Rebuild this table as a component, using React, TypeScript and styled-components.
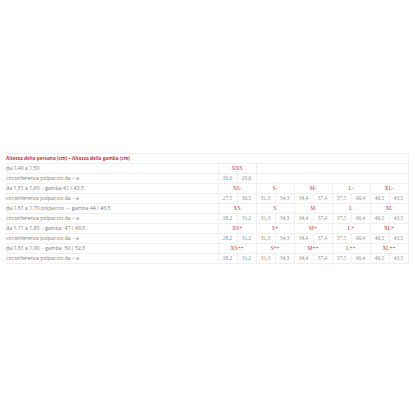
import React from 'react'
import styled, { createGlobalStyle } from 'styled-components'

const Global = createGlobalStyle`
  html, body {
    margin: 0;
    padding: 0;
    background: #fff;
  }
`

const Page = styled.div`
  width: 416px;
  height: 416px;
  padding: 153px 0 0 6px;
  box-sizing: border-box;
`

const Table = styled.table`
  width: 402px;
  table-layout: fixed;
  border-collapse: collapse;
  font-family: 'Open Sans', 'Liberation Sans', sans-serif;
  font-size: 5.2px;
  line-height: 9px;
  color: #7a7a7a;
`

const LabelCell = styled.td<{ $head?: boolean }>`
  width: 212px;
  height: 9px;
  padding: 0;
  border-top: 1px solid #efefef;
  border-bottom: 1px solid #efefef;
  border-right: 1px solid #efefef;
  color: ${(p) => (p.$head ? '#c8343a' : '#7a7a7a')};
  font-size: ${(p) => (p.$head ? '4.7px' : '5.2px')};
  font-weight: ${(p) => (p.$head ? 700 : 400)};
  white-space: pre;
  overflow: hidden;
`

const Cell = styled.td<{ $size?: boolean }>`
  height: 9px;
  padding: 0;
  border: 1px solid #efefef;
  text-align: center;
  font-family: 'Liberation Serif', serif;
  font-size: 5.4px;
  color: ${(p) => (p.$size ? '#c8343a' : '#8f8f8f')};
  white-space: nowrap;
`

const ColLabel = styled.col`
  width: 212px;
`
const ColVal = styled.col`
  width: 19px;
`

type Group = {
  label: string
  sizes: string[]
  values: string[]
}

const groups: Group[] = [
  { label: 'da 1,51 a 1,60  - gamba 41 / 43,5', sizes: ['XS-', 'S-', 'M-', 'L-', 'XL-'], values: ['27,5', '30,5', '31,3', '34,3', '34,4', '37,4', '37,5', '40,4', '40,5', '43,5'] },
  { label: 'da 1,61 a 1,70 polpaccio  –  gamba 44 / 46,5', sizes: ['XS', 'S', 'M', 'L', 'XL'], values: ['28,2', '31,2', '31,3', '34,3', '34,4', '37,4', '37,5', '40,4', '40,5', '43,5'] },
  { label: 'da 1,71 a 1,80  - gamba  47 / 49,5', sizes: ['XS+', 'S+', 'M+', 'L+', 'XL+'], values: ['28,2', '31,2', '31,3', '34,3', '34,4', '37,4', '37,5', '40,4', '40,5', '43,5'] },
  { label: 'da 1,81 a 1,90  - gamba  50 / 52,5', sizes: ['XS++', 'S++', 'M++', 'L++', 'XL++'], values: ['28,2', '31,2', '31,3', '34,3', '34,4', '37,4', '37,5', '40,4', '40,5', '43,5'] },
]

const circ = 'circonferenza polpaccio da – a'

export default function App() {
  return (
    <Page>
      <Global />
      <Table>
        <colgroup>
          <ColLabel />
          {Array.from({ length: 10 }).map((_, i) => (
            <ColVal key={i} />
          ))}
        </colgroup>
        <tbody>
          <tr>
            <LabelCell $head colSpan={11}>
              Altezza della persona (cm) – Altezza della gamba (cm)
            </LabelCell>
          </tr>
          <tr>
            <LabelCell>da 1,40 a 1,50</LabelCell>
            <Cell $size colSpan={2}>XXS</Cell>
            <Cell colSpan={8} />
          </tr>
          <tr>
            <LabelCell>{circ}</LabelCell>
            <Cell>26,0</Cell>
            <Cell>29,0</Cell>
            <Cell colSpan={8} />
          </tr>
          {groups.map((g) => (
            <React.Fragment key={g.label}>
              <tr>
                <LabelCell>{g.label}</LabelCell>
                {g.sizes.map((s) => (
                  <Cell $size colSpan={2} key={s}>
                    {s}
                  </Cell>
                ))}
              </tr>
              <tr>
                <LabelCell>{circ}</LabelCell>
                {g.values.map((v, i) => (
                  <Cell key={i}>{v}</Cell>
                ))}
              </tr>
            </React.Fragment>
          ))}
        </tbody>
      </Table>
    </Page>
  )
}
